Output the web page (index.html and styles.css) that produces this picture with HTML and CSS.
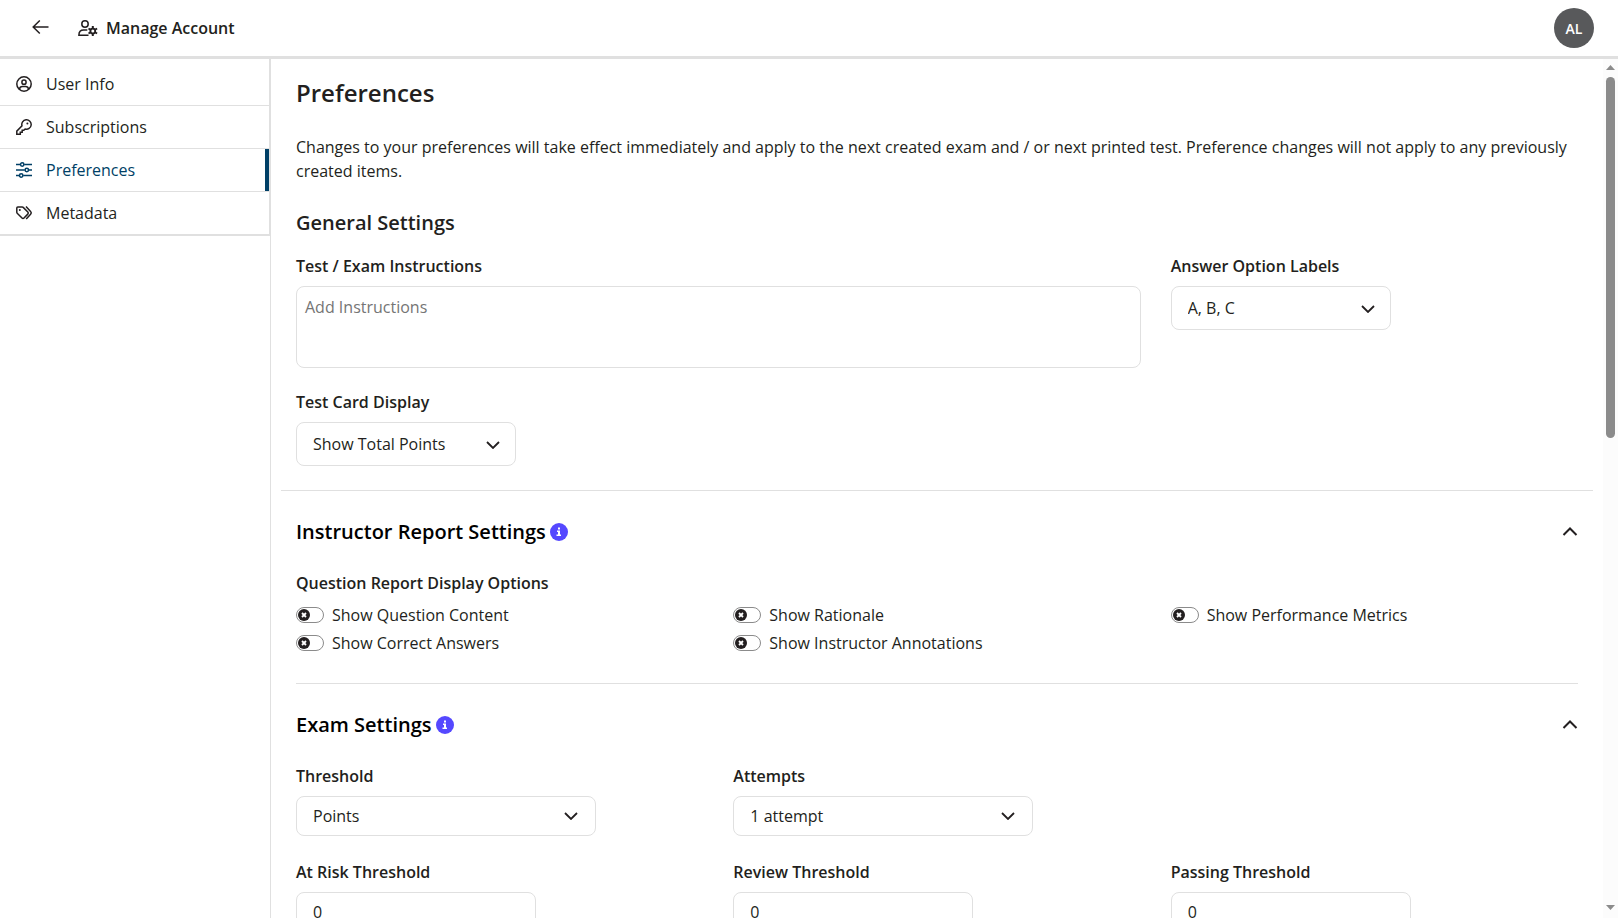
FILE: index.html
```html
<!DOCTYPE html>
<html lang="en">
<head>
  <meta charset="UTF-8" />
  <meta name="viewport" content="width=device-width, initial-scale=1.0" />
  <title>Manage Account</title>
  <link rel="stylesheet" href="styles.css">
</head>
<body>

  <header class="topbar">
    <button type="button" class="icon-btn back-btn" aria-label="Back">
      <svg width="17" height="16" viewBox="0 0 17 16"><path d="M16.500 7H1.200M7.800.5L1.200 7l6.600 6.500" /></svg>
    </button>
    <svg class="title-icon" width="20" height="16" viewBox="0 0 20 16">
      <circle cx="7" cy="4" r="3.200" />
      <path d="M10.500 15.200H.9c0-3.400 2-5.200 4.800-5.200h3.600" />
      <circle class="gear" cx="14.800" cy="11" r="2.600" />
      <path class="gear-teeth" d="M14.800 6v10M10.500 8.500l8.600 5M19.100 8.500l-8.600 5" />
      <circle class="gear-hole" cx="14.800" cy="11" r="1.500" />
    </svg>
    <h1 class="page-title">Manage Account</h1>
    <button type="button" class="avatar">AL</button>
  </header>

  <div class="layout">
    <aside class="sidebar">
      <nav class="side-nav">
        <a href="#user-info" class="nav-item">
          <svg width="16" height="16" viewBox="0 0 16 16"><circle cx="8" cy="8" r="7.200" /><circle cx="8" cy="6.200" r="2.100" /><path d="M3.400 13.300c.4-2 1.600-2.700 3-2.700h3.200c1.400 0 2.600.7 3 2.700" /></svg>
          User Info
        </a>
        <a href="#subscriptions" class="nav-item">
          <svg width="16" height="16" viewBox="0 0 16 16"><path d="M6 6.900a4.700 4.700 0 1 1 3.100 3.100L7.800 11.300H6.200v1.900H4.300v2H.8v-3.100z" /><circle class="dot" cx="11.400" cy="4.600" r="1" /></svg>
          Subscriptions
        </a>
        <a href="#preferences" class="nav-item active">
          <svg width="16" height="16" viewBox="0 0 16 16"><path d="M0 2.500h4.200M8.200 2.500H16M0 8h8.800M12.800 8H16M0 13.500h3.200M7.200 13.500H16" /><circle cx="6.200" cy="2.500" r="1.700" /><circle cx="10.800" cy="8" r="1.700" /><circle cx="5.200" cy="13.500" r="1.700" /></svg>
          Preferences
        </a>
        <a href="#metadata" class="nav-item">
          <svg width="16" height="16" viewBox="0 0 16 16"><path d="M.8 3c0-.6.4-1 1-1h4.400c.4 0 .7.100 1 .4l4.600 4.700c.6.6.6 1.400 0 2l-3.800 3.900c-.6.6-1.400.6-2 0L1.200 8.300c-.3-.3-.4-.6-.4-1zM10 1.600l4.600 4.900c.8.800.8 1.900 0 2.700L10.200 14" /><circle class="dot" cx="3.800" cy="4.900" r="1" /></svg>
          Metadata
        </a>
      </nav>
    </aside>

    <main class="content">
      <section class="general">
        <h2>Preferences</h2>
        <p class="intro">Changes to your preferences will take effect immediately and apply to the next created exam and / or next printed test. Preference changes will not apply to any previously created items.</p>

        <h3>General Settings</h3>
        <div class="row">
          <div class="field wide">
            <label for="instructions">Test / Exam Instructions</label>
            <textarea id="instructions" placeholder="Add Instructions"></textarea>
          </div>
          <div class="field">
            <label for="answerLabels">Answer Option Labels</label>
            <select id="answerLabels" class="tall">
              <option>A, B, C</option>
            </select>
          </div>
          <div class="field">
            <label for="testCard">Test Card Display</label>
            <select id="testCard" class="tall">
              <option>Show Total Points</option>
            </select>
          </div>
        </div>
      </section>

      <section class="panel">
        <div class="panel-header">
          <h3>Instructor Report Settings</h3>
          <button type="button" class="icon-btn info-btn" aria-label="About instructor report settings">
            <svg width="18" height="18" viewBox="0 0 18 18"><circle cx="9" cy="9" r="9" /><path d="M8 4.500h2v2H8zM7 7.500h3v4h1V13H6.500v-1.500H8V9H7z" /></svg>
          </button>
          <button type="button" class="icon-btn collapse-btn" aria-label="Collapse">
            <svg width="16" height="10" viewBox="0 0 16 10"><path d="M1.500 8L8 1.500 14.500 8" /></svg>
          </button>
        </div>
        <h4>Question Report Display Options</h4>
        <div class="row toggles">
          <label class="toggle"><input type="checkbox"> Show Question Content</label>
          <label class="toggle"><input type="checkbox"> Show Rationale</label>
          <label class="toggle"><input type="checkbox"> Show Performance Metrics</label>
          <label class="toggle"><input type="checkbox"> Show Correct Answers</label>
          <label class="toggle"><input type="checkbox"> Show Instructor Annotations</label>
        </div>
      </section>

      <section class="panel exam">
        <div class="panel-header">
          <h3>Exam Settings</h3>
          <button type="button" class="icon-btn info-btn" aria-label="About exam settings">
            <svg width="18" height="18" viewBox="0 0 18 18"><circle cx="9" cy="9" r="9" /><path d="M8 4.500h2v2H8zM7 7.500h3v4h1V13H6.500v-1.500H8V9H7z" /></svg>
          </button>
          <button type="button" class="icon-btn collapse-btn" aria-label="Collapse">
            <svg width="16" height="10" viewBox="0 0 16 10"><path d="M1.500 8L8 1.500 14.500 8" /></svg>
          </button>
        </div>
        <div class="row">
          <div class="field">
            <label for="threshold">Threshold</label>
            <select id="threshold">
              <option>Points</option>
            </select>
          </div>
          <div class="field wide">
            <label for="attempts">Attempts</label>
            <select id="attempts">
              <option>1 attempt</option>
            </select>
          </div>
          <div class="field">
            <label for="atRisk">At Risk Threshold</label>
            <input type="text" id="atRisk" value="0" />
          </div>
          <div class="field">
            <label for="review">Review Threshold</label>
            <input type="text" id="review" value="0" />
          </div>
          <div class="field">
            <label for="passing">Passing Threshold</label>
            <input type="text" id="passing" value="0" />
          </div>
        </div>
      </section>
    </main>

    <div class="scrollbar" aria-hidden="true">
      <svg width="9" height="5" viewBox="0 0 9 5"><path d="M0 5l4.500-5L9 5z" /></svg>
      <div class="track"><div class="thumb"></div></div>
      <svg width="9" height="5" viewBox="0 0 9 5"><path d="M0 0l4.500 5L9 0z" /></svg>
    </div>
  </div>

</body>
</html>
```
FILE: styles.css
```css
* {
  box-sizing: border-box;
}

body {
  font-family: "Open Sans", sans-serif;
  font-size: 16px;
  line-height: 24px;
  color: #231f20;
  background-color: #fff;
  margin: 0;
  height: 100vh;
  display: flex;
  flex-direction: column;
}

h1, h2, h3, h4, p {
  margin: 0;
}

svg {
  display: block;
  flex-shrink: 0;
  fill: none;
  stroke: currentColor;
  stroke-width: 1.5;
}

.icon-btn {
  padding: 0;
  border: none;
  background: none;
  color: inherit;
  cursor: pointer;
}

/* top bar */
.topbar {
  display: flex;
  align-items: center;
  padding: 8px 24px 8px 32px;
  border-bottom: 3px solid #e0e0e0;
}

.title-icon {
  margin: 0 8px 0 29px;
}

.title-icon .gear {
  fill: currentColor;
}

.title-icon .gear-teeth {
  stroke-width: 2;
}

.title-icon .gear-hole {
  fill: #fff;
  stroke: none;
}

.page-title {
  font-size: 16px;
  font-weight: 600;
}

.avatar {
  margin-left: auto;
  width: 40px;
  height: 40px;
  padding: 0;
  border: none;
  border-radius: 50%;
  background-color: #58595b;
  color: #fff;
  font-family: inherit;
  font-size: 14px;
  font-weight: 600;
  cursor: pointer;
}

.layout {
  flex: 1;
  display: flex;
  min-height: 0;
}

/* sidebar */
.sidebar {
  flex: 0 0 271px;
  border-right: 1px solid #e0e0e0;
}

.side-nav {
  padding-top: 4px;
  border-right: 1px solid #e0e0e0;
  border-bottom: 2px solid #e0e0e0;
}

.nav-item {
  display: flex;
  align-items: center;
  gap: 14px;
  padding: 9px 16px;
  color: #231f20;
  text-decoration: none;
}

.nav-item + .nav-item {
  border-top: 1px solid #e0e0e0;
}

.nav-item.active {
  color: #003f66;
  box-shadow: inset -4px 0 0 #003f66;
}

.nav-item .dot {
  fill: currentColor;
  stroke: none;
}

/* content */
.content {
  flex: 1;
  min-width: 0;
  overflow-y: auto;
  scrollbar-width: none;
  padding: 16px 10px 0;
}

.scrollbar {
  flex: 0 0 15px;
  display: flex;
  flex-direction: column;
  align-items: center;
  gap: 7px;
  padding: 6px 0 8px;
  background-color: #fcfcfc;
}

.scrollbar path {
  fill: #8b8b8b;
  stroke: none;
}

.track {
  flex: 1;
  width: 9px;
}

.thumb {
  height: 44%;
  border-radius: 5px;
  background-color: #8b8b8b;
}

.general {
  padding: 0 15px 24px;
  border-bottom: 1px solid #e0e0e0;
}

h2 {
  font-size: 24px;
  font-weight: 600;
  line-height: 36px;
}

h3 {
  font-size: 20px;
  font-weight: 600;
  line-height: 30px;
}

h4 {
  font-size: 16px;
  font-weight: 600;
}

.intro {
  margin: 24px 0 25px;
}

.row {
  display: grid;
  grid-template-columns: repeat(3, 1fr);
  column-gap: 30px;
  row-gap: 24px;
}

.general .row {
  margin-top: 16px;
  row-gap: 22px;
}

.field {
  display: flex;
  flex-direction: column;
  align-items: flex-start;
  gap: 8px;
}

.field.wide {
  grid-column: span 2;
}

.field label {
  font-weight: 600;
}

textarea,
select,
input[type="text"] {
  font-family: inherit;
  font-size: 16px;
  line-height: 24px;
  color: #231f20;
  background-color: #fff;
  border: 1px solid #e0e0e0;
  border-radius: 8px;
}

textarea {
  width: 100%;
  height: 82px;
  padding: 8px;
  resize: none;
}

textarea::placeholder {
  color: #757575;
}

select {
  appearance: none;
  width: 300px;
  height: 40px;
  padding: 0 40px 0 16px;
  background-image: url("data:image/svg+xml,%3Csvg xmlns='http://www.w3.org/2000/svg' width='14' height='8'%3E%3Cpath d='M1 1l6 6l6-6' fill='none' stroke='%23231f20' stroke-width='1.800'/%3E%3C/svg%3E");
  background-repeat: no-repeat;
  background-position: right 17px center;
}

select.tall {
  width: 220px;
  height: 44px;
  background-position: right 15px top 18px;
}

input[type="text"] {
  width: 240px;
  height: 40px;
  padding: 0 16px;
}

/* collapsible panels */
.panel {
  margin: 0 15px;
  padding-bottom: 26px;
  border-bottom: 1px solid #e0e0e0;
}

.panel.exam {
  border-bottom: none;
  padding-bottom: 1000px;
}

.panel-header {
  display: flex;
  align-items: center;
  gap: 4px;
  padding: 26px 0 24px;
  color: #000;
}

.info-btn circle {
  fill: #5548ff;
  stroke: none;
}

.info-btn path {
  fill: #fff;
  stroke: none;
}

.collapse-btn {
  margin-left: auto;
}

.collapse-btn path {
  stroke: #231f20;
  stroke-width: 2;
}

.row.toggles {
  margin-top: 6px;
  row-gap: 0;
}

.toggle {
  display: flex;
  align-items: center;
  gap: 8px;
  line-height: 28px;
}

.toggle input {
  appearance: none;
  flex-shrink: 0;
  width: 28px;
  height: 16px;
  margin: 0;
  border: 1px solid #8b8b8b;
  border-radius: 8px;
  background: url("data:image/svg+xml,%3Csvg xmlns='http://www.w3.org/2000/svg' width='12' height='12'%3E%3Ccircle cx='6' cy='6' r='6' fill='%23231f20'/%3E%3Cpath d='M4 4l4 4M8 4l-4 4' stroke='%23fff' stroke-width='1.800'/%3E%3C/svg%3E") no-repeat 1px center;
}
```
